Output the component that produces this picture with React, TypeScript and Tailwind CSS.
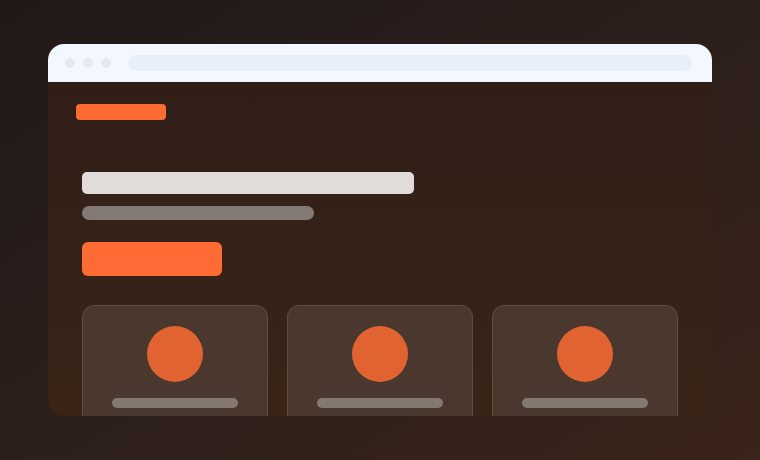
import React from "react";

function Card() {
  return (
    <div className="flex flex-col items-center rounded-xl border border-[#5e4b41] bg-[#4a372d] pt-5 h-[130px]">
      <div className="h-14 w-14 rounded-full bg-[#e16331]" />
      <div className="mt-4 h-2.5 w-[126px] rounded-full bg-[#857870]" />
    </div>
  );
}

export default function App() {
  return (
    <div className="h-[460px] w-[760px] bg-gradient-to-br from-[#211918] via-[#2c1f1b] to-[#3b241a] px-12 pt-11">
      <div className="h-[372px] overflow-hidden rounded-2xl bg-gradient-to-b from-[#2f1e17] to-[#3a2418]">
        <div className="flex h-[38px] items-center bg-[#f3f7ff] pl-[17px] pr-5">
          <div className="flex gap-2">
            <div className="h-2.5 w-2.5 rounded-full bg-[#e3e8f4]" />
            <div className="h-2.5 w-2.5 rounded-full bg-[#e3e8f4]" />
            <div className="h-2.5 w-2.5 rounded-full bg-[#e3e8f4]" />
          </div>
          <div className="ml-[17px] h-4 flex-1 rounded-full bg-[#e8eefa]" />
        </div>
        <div className="px-7 pt-[22px]">
          <div className="h-4 w-[90px] rounded bg-[#ff6b35]" />
          <div className="px-1.5">
            <div className="mt-[52px] h-[22px] w-[332px] rounded-[5px] bg-[#dfdcda]" />
            <div className="mt-3 h-3.5 w-[232px] rounded-full bg-[#847a75]" />
            <div className="mt-[22px] h-[34px] w-[140px] rounded-md bg-[#ff6b35]" />
            <div className="mt-[29px] grid grid-cols-3 gap-[19px]">
              <Card />
              <Card />
              <Card />
            </div>
          </div>
        </div>
      </div>
    </div>
  );
}
